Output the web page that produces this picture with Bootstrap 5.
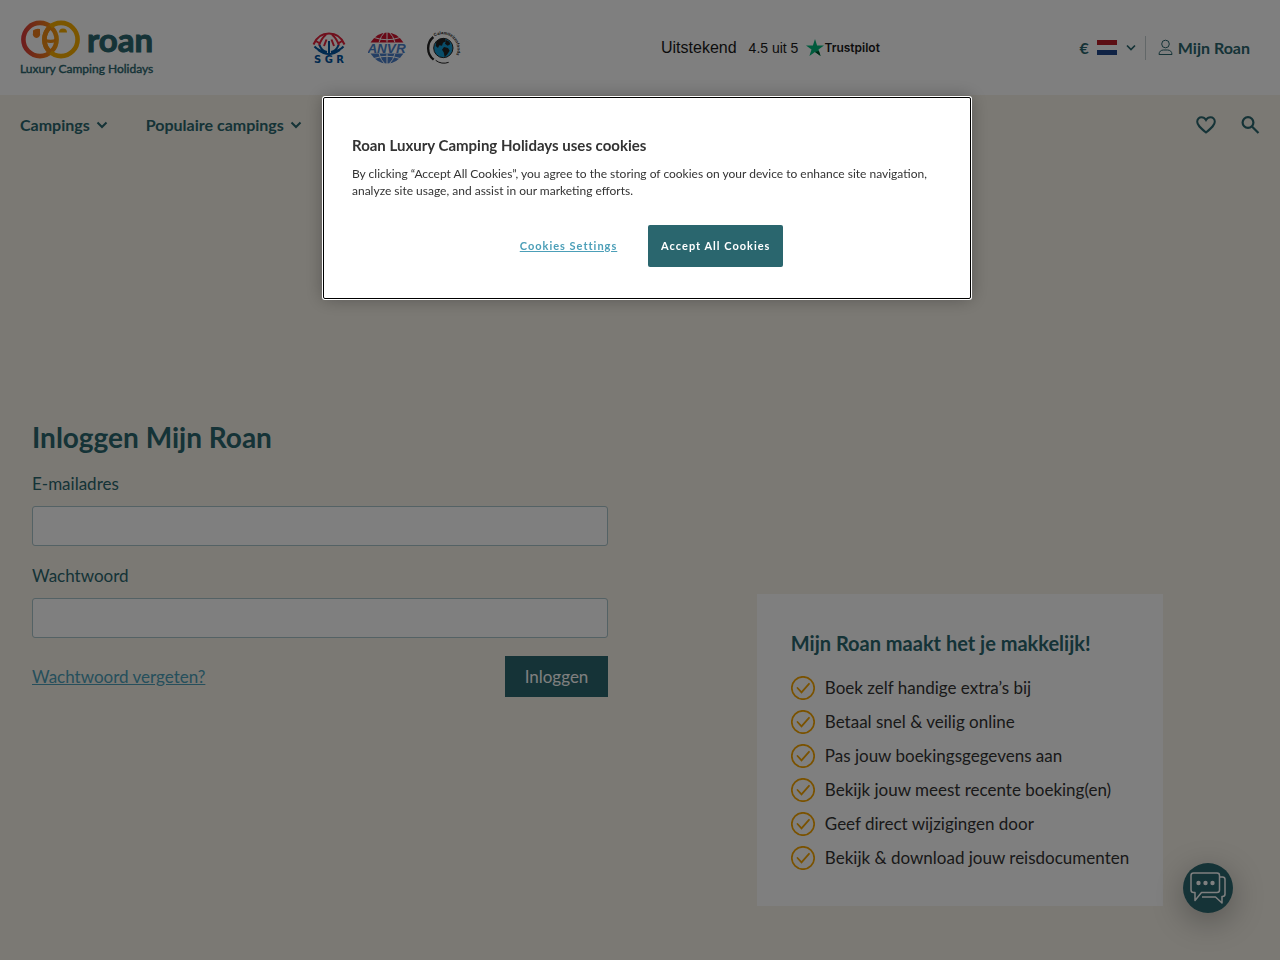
<!DOCTYPE html>
<html lang="nl">
<head>
<meta charset="utf-8">
<meta name="viewport" content="width=device-width, initial-scale=1">
<title>Inloggen Mijn Roan</title>
<link href="https://cdn.jsdelivr.net/npm/bootstrap@5.3.0/dist/css/bootstrap.min.css" rel="stylesheet">
<style>
  :root { --teal: #2a666e; --sand: #f6f2e8; --sky: #4c9fb8; --amber: #f5a400; }
  body { font-family: Lato, "Open Sans", sans-serif; font-size: 17px; line-height: 24px; color: #333; background: var(--sand); }
  svg { display: block; flex: none; }
  .teal { color: var(--teal); }
  .top-grid { display: grid; grid-template-columns: 292fr 349fr 589fr; min-height: 95px; padding: 0 30px 0 20px; }
  .brand-logo { width: 136px; height: 60px; }
  .badges { gap: 20px; }
  .trust { font-family: "Liberation Sans", Arial, sans-serif; color: #191919; font-size: 16px; }
  .trust-score { font-size: 14px; }
  .trust-name { font-family: Inter, sans-serif; font-size: 12px; font-weight: 600; }
  .divider { width: 1px; height: 24px; background: #c4ced0; }
  .site-nav { min-height: 60px; padding: 0 20px; }
  .nav-links { gap: 38px; }
  .nav-links a { gap: 6px; }
  .site-nav a, .account { font-size: 16px; font-weight: 700; color: var(--teal); text-decoration: none; }
  .icon-btn { border: 0; background: none; padding: 0; color: var(--teal); }
  main { padding: 263px 0 54px; }
  .login { padding: 0 32px; }
  .login h1 { font-size: 28px; line-height: 38px; font-weight: 700; margin-bottom: 16px; }
  .login label { margin-bottom: 10px; }
  .login .form-control { height: 40px; border: 1px solid #a9c4ca; border-radius: 3px; margin-bottom: 18px; }
  .forgot { color: var(--sky); }
  .btn-teal { background: var(--teal); color: #fff; border: 0; border-radius: 0; }
  .btn-login { width: 103px; height: 41px; font-size: 17px; padding: 0; }
  .perks { background: #fff; padding: 36px 34px; margin-top: 176px; }
  .perks h2 { font-size: 20px; line-height: 26px; font-weight: 700; margin-bottom: 20px; }
  .perks ul { display: grid; gap: 10px; }
  .perks li { display: flex; gap: 10px; }
  .chat { position: fixed; right: 47px; bottom: 47px; width: 50px; height: 50px; border: 0; padding: 0; border-radius: 50%; background: var(--teal); box-shadow: 0 8px 32px rgba(0,0,0,.3); }
  .shade { position: fixed; inset: 0; z-index: 1040; background: rgba(0,0,0,.5); }
  .cookie-wrap { position: fixed; inset: 97px 0 auto 14px; z-index: 1050; }
  .cookie-box { width: 648px; min-height: 202px; padding: 37px 28px 31px; background: #fff; border: 1px solid #000; border-radius: 2px; box-shadow: 0 0 0 1px #fff, 0 0 18px rgba(0,0,0,.3); }
  .cookie-box h2 { font-size: 15px; line-height: 20px; font-weight: 700; margin-bottom: 10px; }
  .cookie-box p { font-size: 12px; line-height: 17px; margin-bottom: 26px; }
  .cookie-actions { gap: 30px; padding-left: 8px; }
  .cookie-link, .cookie-accept { font-size: 11px; font-weight: 700; letter-spacing: 1px; }
  .cookie-link { color: var(--sky); }
  .cookie-accept { width: 135px; height: 42px; padding: 0; border-radius: 2px; }
</style>
</head>
<body>
<header>
  <div class="top-grid bg-white align-items-center">
    <a href="#" aria-label="Roan Luxury Camping Holidays">
      <svg class="brand-logo" viewBox="0 0 136 60" font-family="Lato, sans-serif" fill="#2a666e">
        <defs><linearGradient id="sun" gradientUnits="userSpaceOnUse" x1="1" y1="0" x2="48" y2="0"><stop stop-color="#d9363e"/><stop offset=".55" stop-color="#ef7d1a"/><stop offset="1" stop-color="#fbb900"/></linearGradient></defs>
        <g fill="none" stroke-width="4.6"><circle cx="20" cy="21.5" r="16.6" stroke="url(#sun)"/><circle cx="41" cy="21.5" r="16.6" stroke="#f7ac00"/><path d="M30.5 8.6A16.6 16.6 0 0 0 30.5 34.4" stroke="#ee8a14"/></g>
        <path d="M13 12.500q3-2.500 7-1.500v4a3.700 3.700 0 1 1-7 0z" fill="#ef7d1a"/><path d="M39 14.500a4 4 0 0 1 8 0z" fill="#f7ac00"/>
        <path d="M25 20.500q5.500 2.500 11 0v3q-5.500 3-11 0z" fill="#f08c12"/>
        <text x="67" y="34" font-size="33" font-weight="700" stroke="#2a666e">roan</text>
        <text x="0" y="55" font-size="12" stroke="#2a666e" stroke-width=".4">Luxury Camping Holidays</text>
      </svg>
    </a>
    <div class="badges d-flex align-items-center">
      <svg width="36" height="32" viewBox="0 0 72 64" role="img" aria-label="SGR">
        <g fill="none" stroke-width="4"><g stroke="#e0203a"><path d="M3 25Q12 3 34 3T65 25"/><path d="M14 27Q18 14 28 5M54 27Q50 14 40 5M24 28l5-13M44 28l-5-13M8 18l9 6M60 18l-9 6"/></g><g stroke="#00549f"><path d="M5 29q8 9 25 11M63 29q-8 9-25 11M34 18v26M15 26q4 12 15 14M53 26q-4 12-15 14M12 36q22 16 44 0"/></g></g>
        <text x="34" y="62" text-anchor="middle" font-family="DejaVu Sans, sans-serif" font-weight="700" font-size="20" fill="#00549f">S G R</text>
      </svg>
      <svg width="38" height="32" viewBox="0 0 76 64" role="img" aria-label="ANVR">
        <path d="M5 21Q18 1 38 1t33 20z" fill="#d3132f"/><path d="M5 43q13 20 33 20t33-20z" fill="#4a7fc8"/>
        <g fill="none" stroke="#fff" stroke-width="2"><path d="M38 0v21M38 43v21M22 21Q26 7 33 1M54 21Q50 7 43 1M22 43q4 14 11 20M54 43q-4 14-11 20M12 11q26 9 52 0M12 53q26-9 52 0"/></g>
        <text x="37" y="41" text-anchor="middle" font-family="Liberation Sans, sans-serif" font-style="italic" font-weight="700" font-size="27" fill="#4a7fc8">ANVR</text>
      </svg>
      <svg width="36" height="34" viewBox="0 0 108 102" role="img" aria-label="Calamiteitenfonds">
        <defs><path id="arc" d="M26 17A39 39 0 0 1 74 91"/></defs>
        <circle cx="52" cy="51" r="29" fill="#129bd3" stroke="#222" stroke-width="3"/>
        <path d="M31 32q12-12 25-10l4 9-9 4-3 9-8-1-4 8-7-6zM61 27l9 5 3 8-8 4-8-6zM54 48l12 3 5 8-8 12-7 7-3-14-5-8z" fill="#222"/>
        <path d="M22 18A44 44 0 0 0 23 86" fill="none" stroke="#222" stroke-width="7"/><path d="M29 88A42 42 0 0 0 68 94" fill="none" stroke="#222" stroke-width="3"/>
        <text font-family="Liberation Sans, sans-serif" font-weight="700" font-size="13" fill="#222"><textPath href="#arc">Calamiteitenfonds</textPath></text>
      </svg>
    </div>
    <div class="d-flex align-items-center justify-content-between">
      <a href="#" class="trust d-flex align-items-center text-decoration-none">
        <span>Uitstekend</span><span class="trust-score ms-2 ps-1">4.5 uit 5</span>
        <svg class="ms-2" width="18" height="18" viewBox="0 0 18 18"><path d="M9 0l2.100 6.500H18l-5.500 4 2.100 6.500L9 13l-5.600 4 2.100-6.500L0 6.500h6.900z" fill="#00b67a"/><path d="M9 13l3.900-1.100 1.700 5.100z" fill="#005128"/></svg>
        <span class="trust-name">Trustpilot</span>
      </a>
      <div class="d-flex align-items-center">
        <button class="icon-btn account d-flex align-items-center" type="button" aria-label="Taal en valuta"><span>€</span>
          <svg class="ms-2" width="20" height="15" viewBox="0 0 20 15"><path fill="#fff" d="M0 0h20v15H0z"/><path fill="#b81c26" d="M0 0h20v5H0z"/><path fill="#21468b" d="M0 10h20v5H0z"/></svg>
          <svg class="ms-2" width="12" height="12" viewBox="0 0 12 12" fill="none" stroke="currentColor" stroke-width="1.700"><path d="M2 3.500l4 4 4-4"/></svg>
        </button>
        <span class="divider mx-2"></span>
        <a class="account d-flex align-items-center gap-1 ms-1" href="#">
          <svg width="16" height="17" viewBox="0 0 16 17" fill="none" stroke="currentColor" stroke-width="1"><circle cx="7.500" cy="5" r="3.800"/><path d="M1 15.500c0-3 2-4.500 4.500-4.500h4c2.500 0 4.500 1.500 4.500 4.500z"/></svg>
          <span>Mijn Roan</span>
        </a>
      </div>
    </div>
  </div>
  <nav class="site-nav d-flex align-items-center justify-content-between">
    <div class="nav-links d-flex align-items-center">
      <a class="d-flex align-items-center" href="#">Campings <svg width="12" height="12" viewBox="0 0 12 12" fill="none" stroke="currentColor" stroke-width="2"><path d="M1.500 3.500L6 8l4.500-4.500"/></svg></a>
      <a class="d-flex align-items-center" href="#">Populaire campings <svg width="12" height="12" viewBox="0 0 12 12" fill="none" stroke="currentColor" stroke-width="2"><path d="M1.500 3.500L6 8l4.500-4.500"/></svg></a>
    </div>
    <div class="d-flex align-items-center gap-4">
      <button class="icon-btn" type="button" aria-label="Favorieten"><svg width="20" height="20" viewBox="0 0 20 20" fill="none" stroke="currentColor" stroke-width="2"><path d="M10 17.500C4 12.500 1.200 10 1.200 6.800 1.200 4 3.200 2.300 5.500 2.300c2 0 3.500 1.100 4.500 2.700 1-1.600 2.500-2.700 4.500-2.700 2.300 0 4.300 1.700 4.300 4.500 0 3.200-2.800 5.700-8.800 10.700z"/></svg></button>
      <button class="icon-btn" type="button" aria-label="Zoeken"><svg width="20" height="20" viewBox="0 0 20 20" fill="none" stroke="currentColor" stroke-width="2.200"><circle cx="8" cy="7.500" r="5.400"/><path d="M12 11.500l6.500 6.500"/></svg></button>
    </div>
  </nav>
</header>
<main>
  <div class="row g-0">
    <div class="col-md-6">
      <form class="login">
        <h1 class="teal">Inloggen Mijn Roan</h1>
        <label class="teal d-block" for="email">E-mailadres</label>
        <input class="form-control" type="email" id="email">
        <label class="teal d-block" for="pass">Wachtwoord</label>
        <input class="form-control" type="password" id="pass">
        <div class="d-flex justify-content-between align-items-center">
          <a class="forgot" href="#">Wachtwoord vergeten?</a>
          <button class="btn btn-teal btn-login" type="submit">Inloggen</button>
        </div>
      </form>
    </div>
    <div class="col-md-6 d-flex justify-content-center align-items-start">
      <section class="perks">
        <h2 class="teal">Mijn Roan maakt het je makkelijk!</h2>
        <svg width="0" height="0" class="position-absolute"><symbol id="tick" viewBox="0 0 24 24"><g fill="none" stroke="#f5a400"><circle cx="12" cy="12" r="11.200" stroke-width="1.700"/><path d="M6.500 12l4 4.300 7.500-8.500" stroke-width="1.800" stroke-linecap="round"/></g></symbol></svg>
        <ul class="list-unstyled mb-0">
          <li><svg width="24" height="24"><use href="#tick"/></svg>Boek zelf handige extra’s bij</li>
          <li><svg width="24" height="24"><use href="#tick"/></svg>Betaal snel &amp; veilig online</li>
          <li><svg width="24" height="24"><use href="#tick"/></svg>Pas jouw boekingsgegevens aan</li>
          <li><svg width="24" height="24"><use href="#tick"/></svg>Bekijk jouw meest recente boeking(en)</li>
          <li><svg width="24" height="24"><use href="#tick"/></svg>Geef direct wijzigingen door</li>
          <li><svg width="24" height="24"><use href="#tick"/></svg>Bekijk &amp; download jouw reisdocumenten</li>
        </ul>
      </section>
    </div>
  </div>
</main>
<button class="chat d-flex align-items-center justify-content-center" type="button" aria-label="Chat">
  <svg width="36" height="33" viewBox="0 0 36 33" fill="none" stroke="#fff" stroke-width="1.500" stroke-linejoin="round"><path d="M3.500 1h23.500q2.500 0 2.500 2.500v14.500q0 2.500-2.500 2.500H11.500L5 28.500v-8H3.500Q1 20.500 1 18V3.500Q1 1 3.500 1z"/><path d="M30 5h2.500q2.500 0 2.500 2.500v14.500q0 2.500-2.500 2.500H32v6.500l-6.500-6H12"/><g fill="#fff" stroke="none"><circle cx="8.500" cy="11" r="2.200"/><circle cx="15.500" cy="11" r="2.200"/><circle cx="22.500" cy="11" r="2.200"/></g></svg>
</button>
<div class="shade"></div>
<div class="cookie-wrap d-flex justify-content-center">
  <div class="cookie-box" role="dialog" aria-labelledby="cookie-title">
    <h2 id="cookie-title">Roan Luxury Camping Holidays uses cookies</h2>
    <p>By clicking “Accept All Cookies”, you agree to the storing of cookies on your device to enhance site navigation, analyze site usage, and assist in our marketing efforts.</p>
    <div class="cookie-actions d-flex justify-content-center align-items-center">
      <button class="btn btn-link cookie-link p-0" type="button">Cookies Settings</button>
      <button class="btn btn-teal cookie-accept" type="button">Accept All Cookies</button>
    </div>
  </div>
</div>
<script src="https://cdn.jsdelivr.net/npm/bootstrap@5.3.0/dist/js/bootstrap.bundle.min.js"></script>
</body>
</html>
